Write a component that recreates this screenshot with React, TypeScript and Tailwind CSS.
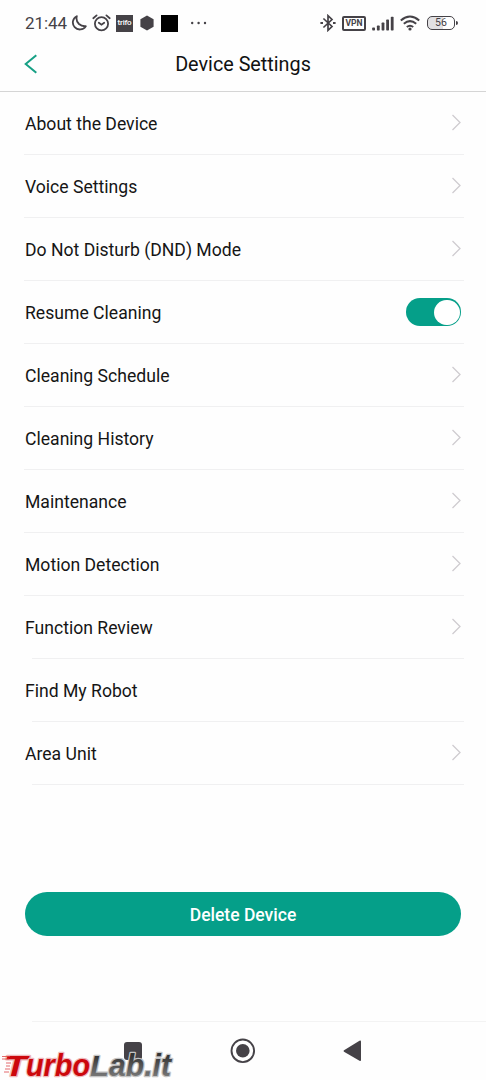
import React from 'react';
import clsx from 'clsx';

interface SettingItem {
  label: string;
  type: 'link' | 'toggle' | 'action';
  insetLine?: boolean;
}

const items: SettingItem[] = [
  { label: 'About the Device', type: 'link' },
  { label: 'Voice Settings', type: 'link' },
  { label: 'Do Not Disturb (DND) Mode', type: 'link' },
  { label: 'Resume Cleaning', type: 'toggle' },
  { label: 'Cleaning Schedule', type: 'link' },
  { label: 'Cleaning History', type: 'link' },
  { label: 'Maintenance', type: 'link' },
  { label: 'Motion Detection', type: 'link' },
  { label: 'Function Review', type: 'link', insetLine: true },
  { label: 'Find My Robot', type: 'action', insetLine: true },
  { label: 'Area Unit', type: 'link', insetLine: true },
];

const StatusBar: React.FC = () => (
  <div className="flex h-[46px] items-center justify-between pl-[25px] pr-[28px] text-[#454247]">
    <div className="flex items-center">
      <span className="w-[46px] pt-px text-[17px] leading-none tracking-[-0.1px]">21:44</span>
      <svg width="16" height="16" viewBox="0 0 16 16" fill="none" stroke="currentColor" strokeWidth="1.8" strokeLinejoin="round">
        <path d="M5.8 1.2A7 7 0 1 0 14.8 11.2Q10.8 11.6 8 9Q4.6 5.6 5.8 1.2Z" />
      </svg>
      <svg className="ml-[5px]" width="19" height="18" viewBox="0 0 19 18" fill="none" stroke="currentColor" strokeWidth="1.8" strokeLinecap="round">
        <circle cx="9.5" cy="9.7" r="6.6" />
        <path d="M1.3 4.2L4.6 1.4M17.7 4.2L14.4 1.4M6.8 8.7L9.5 10.7L12.2 8.7" />
      </svg>
      <span className="ml-[5px] flex h-[17px] w-[17px] items-center justify-center bg-[#454247] text-[8px] font-medium leading-none tracking-[-0.2px] text-white">
        trifo
      </span>
      <svg className="ml-[7px]" width="14" height="16" viewBox="0 0 14 16" fill="currentColor">
        <path d="M7 0.6L13.6 4.2V11.8L7 15.4L0.4 11.8V4.2Z" />
      </svg>
      <span className="ml-[7px] h-[17px] w-[17px] bg-black" />
      <svg className="ml-[12px]" width="18" height="4" viewBox="0 0 18 4" fill="currentColor">
        <circle cx="2.2" cy="2" r="1.2" />
        <circle cx="8.6" cy="2" r="1.2" />
        <circle cx="15" cy="2" r="1.2" />
      </svg>
    </div>
    <div className="flex items-center">
      <svg width="16" height="18" viewBox="0 0 16 18" fill="none" stroke="currentColor" strokeWidth="1.7">
        <path d="M3.4 4.5L12 12.5L8 16.3V1.7L12 5.5L3.4 13.5" />
        <path d="M0.4 9H3M13 9H15.6" strokeWidth="2.2" />
      </svg>
      <span className="ml-[6px] flex h-[15px] w-[24px] items-center justify-center rounded-[2px] border-2 border-[#454247] text-[8.5px] font-bold leading-none">
        VPN
      </span>
      <svg className="ml-[6px]" width="22" height="15" viewBox="0 0 22 15" fill="currentColor">
        <rect x="0.2" y="11.5" width="2.8" height="3" rx="0.7" />
        <rect x="4.9" y="9.5" width="2.8" height="5" rx="0.7" />
        <rect x="9.6" y="6.5" width="2.8" height="8" rx="0.7" />
        <rect x="14.2" y="3.5" width="2.8" height="11" rx="0.7" />
        <rect x="18.8" y="0.8" width="2.8" height="13.7" rx="0.7" />
      </svg>
      <svg className="ml-[6px]" width="20" height="16" viewBox="0 0 20 16" fill="none" stroke="currentColor" strokeWidth="2">
        <path d="M0.8 5.4Q10 -2.3 19.2 5.4M3.8 8.7Q10 3.5 16.2 8.7M6.8 12Q10 9.4 13.2 12" />
        <circle cx="10" cy="14" r="1.6" fill="currentColor" stroke="none" />
      </svg>
      <div className="ml-[7px] flex items-center gap-px">
        <span className="flex h-[14px] w-[28px] items-center justify-center rounded-[5px] border-[1.5px] border-[#454247] bg-linear-to-r from-[#e2e1e3] from-56% to-white to-56% pt-px text-[10.5px] leading-none">
          56
        </span>
        <span className="h-[4px] w-[2px] rounded-r bg-[#454247]" />
      </div>
    </div>
  </div>
);

const Header: React.FC = () => (
  <header className="grid h-[46px] grid-cols-[1fr_auto_1fr] items-center border-b-[1.5px] border-[#d5d5d5] pb-[8px]">
    <button aria-label="Back" className="pb-px pl-[24px]">
      <svg width="14" height="20" viewBox="0 0 14 20" fill="none" stroke="#16a085" strokeWidth="2">
        <path d="M12.3 1.2L1.7 10L12.3 18.8" />
      </svg>
    </button>
    <h1 className="pt-px text-[19.8px] leading-6 text-[#111]">Device Settings</h1>
  </header>
);

const Toggle: React.FC = () => (
  <button role="switch" aria-checked="true" aria-label="Resume Cleaning" className="flex h-7 w-[55px] items-center justify-end rounded-full bg-[#059f89] pr-px">
    <span className="h-[25px] w-[26px] rounded-full bg-white" />
  </button>
);

const SettingRow: React.FC<{ item: SettingItem }> = ({ item }) => (
  <li>
    <div className="flex h-[62px] items-center justify-between pr-[25px] pl-[25px]">
      <span className="pt-[2px] text-[17.6px] leading-6 text-[#151515]">{item.label}</span>
      {item.type === 'toggle' && <Toggle />}
      {item.type === 'link' && (
        <svg className="mb-px" width="10" height="17" viewBox="0 0 10 17" fill="none" stroke="#cfccd0" strokeWidth="1.3">
          <path d="M1.5 1L9 8.5L1.5 16" />
        </svg>
      )}
    </div>
    <div className={clsx('mr-[22px] h-px bg-[#f0f0f1]', item.insetLine ? 'ml-8' : 'ml-6')} />
  </li>
);

const Watermark: React.FC = () => (
  <svg className="absolute bottom-0 left-0" width="180" height="40" viewBox="0 0 180 40">
    <defs>
      <linearGradient id="grey" x1="0" x2="0" y1="0" y2="1">
        <stop offset="0.2" stopColor="#333" />
        <stop offset="0.9" stopColor="#808080" />
      </linearGradient>
    </defs>
    <g fontFamily="'Liberation Sans', Arial, sans-serif" fontWeight="bold" fontStyle="italic" strokeLinejoin="round" paintOrder="stroke" strokeWidth="2.5">
      <g fill="url(#grey)" stroke="#c4c4c4">
        <text x="90" y="36" fontSize="30" textLength="19" lengthAdjust="spacingAndGlyphs">L</text>
        <text x="109" y="36" fontSize="31" textLength="62" lengthAdjust="spacingAndGlyphs">ab.it</text>
      </g>
      <g fill="#cc080c" stroke="#eeb9bb">
        <text x="4" y="36" fontSize="30" textLength="23" lengthAdjust="spacingAndGlyphs">T</text>
        <text x="26" y="36" fontSize="31" textLength="64" lengthAdjust="spacingAndGlyphs">urbo</text>
      </g>
    </g>
    {/* speed lines trailing off the T */}
    <path d="M2 16.5H10M2 19H9M6 23H11M6 26H10M5 29H10M4 32H9" stroke="#dd4549" strokeWidth="0.8" />
  </svg>
);

const NavBar: React.FC = () => (
  <nav className="relative h-[59px]">
    <div className="ml-8 h-px bg-[#f3f3f3]" />
    <div className="flex h-[58px] items-center pl-[124px] text-[#454247]">
      <span className="mb-px h-[18px] w-[18px] rounded-[3px] bg-[#454247]" />
      <svg className="ml-[88px]" width="26" height="26" viewBox="0 0 26 26">
        <circle cx="12.8" cy="12.8" r="11.3" fill="none" stroke="currentColor" strokeWidth="1.9" />
        <circle cx="12.8" cy="12.8" r="6.8" fill="currentColor" />
      </svg>
      <svg className="ml-[87px]" width="19" height="22" viewBox="0 0 19 22" fill="currentColor">
        <path d="M1 10.2L16.5 0.8Q18 0 18 1.5V20Q18 21.6 16.5 20.8L1 11.8Q0 11 1 10.2Z" />
      </svg>
    </div>
    <Watermark />
  </nav>
);

const App: React.FC = () => {
  return (
    <div className="flex h-[1080px] w-[486px] flex-col overflow-hidden bg-[#fefefe] font-[Roboto,sans-serif]">
      <StatusBar />
      <Header />
      <ul>
        {items.map((item) => (
          <SettingRow key={item.label} item={item} />
        ))}
      </ul>
      <div className="mt-[107px] pr-[25px] pl-[25px]">
        <button className="h-[44px] w-full rounded-full bg-[#059f89] pt-[2px] text-[17.5px] font-medium text-white">Delete Device</button>
      </div>
      <div className="mt-auto">
        <NavBar />
      </div>
    </div>
  );
};

export default App;
